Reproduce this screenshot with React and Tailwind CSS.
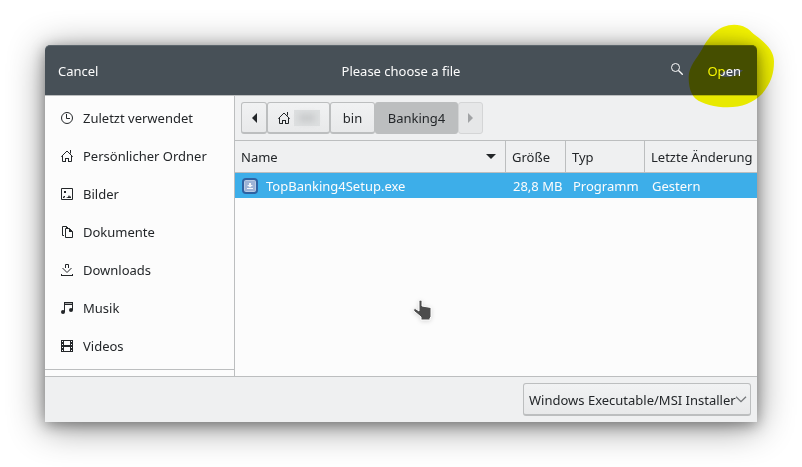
import React from "react";

function Icon({ children, className = "" }) {
  return (
    <svg aria-hidden="true" viewBox="0 0 12 12" className={`h-3 w-3 shrink-0 ${className}`}>
      {children}
    </svg>
  );
}

const ClockIcon = () => (
  <Icon>
    <circle cx="6" cy="6" r="5.5" fill="none" stroke="currentColor" />
    <path d="M5.5 2v4.5H9" fill="none" stroke="currentColor" />
  </Icon>
);

const HomeIcon = () => (
  <Icon>
    <path d="M.3 6.7 6 1l5.7 5.7M1.5 6v5.5H4M10.500 6v5.5H8" fill="none" stroke="currentColor" />
    <path d="M4 8h1v4H4zM7 8h1v4H7zM4 8h4v1H4zM9 0h1v3.500H9z" fill="currentColor" />
  </Icon>
);

const ImageIcon = () => (
  <Icon>
    <path d="M.5.5h11v11H.5z" fill="none" stroke="currentColor" />
    <path d="M3 3h2v2H3zM2 10V9l1-1h1v1l-1 1zM5 10l2-1 1-2 1 2 1-1v2z" fill="currentColor" />
  </Icon>
);

const DocumentsIcon = () => (
  <Icon>
    <path d="M3 9.500H1.500v-9h4L7 2M4.500 2.500h4l3 3v6h-7z" fill="none" stroke="currentColor" />
    <path d="M5 0l3 3H5zM8 2l4 4H8z" fill="currentColor" />
  </Icon>
);

const DownloadIcon = () => (
  <Icon>
    <path d="M0 11.500h12M.5 10v2M11.500 10v2M1.500 4 6 8.500 10.500 4M4.500 4V.5h3V4" fill="none" stroke="currentColor" />
  </Icon>
);

const MusicIcon = () => (
  <Icon>
    <path d="M3 0h9v3H3z" fill="currentColor" />
    <path d="M3.500 1v9M11.500 1v7" fill="none" stroke="currentColor" />
    <path d="M4 1.500h7" stroke="#fcfcfc" strokeWidth=".6" />
    <circle cx="2" cy="10" r="2" fill="currentColor" />
    <circle cx="10" cy="8" r="2" fill="currentColor" />
  </Icon>
);

const VideoIcon = () => (
  <Icon>
    <path d="M0 0h12v12H0z" fill="currentColor" />
    <path d="M3 1h6v4H3zM3 7h6v4H3zM1 1h1v1H1zM1 4h1v1H1zM1 7h1v1H1zM1 10h1v1H1zM10 1h1v1h-1zM10 4h1v1h-1zM10 7h1v1h-1zM10 10h1v1h-1z" fill="#fcfcfc" />
  </Icon>
);

const places = [
  ["Zuletzt verwendet", ClockIcon],
  ["Persönlicher Ordner", HomeIcon],
  ["Bilder", ImageIcon],
  ["Dokumente", DocumentsIcon],
  ["Downloads", DownloadIcon],
  ["Musik", MusicIcon],
  ["Videos", VideoIcon],
];

const pathButton =
  "flex h-8 items-center justify-center rounded-[3px] border border-b-2 border-[#bcbebf] bg-gradient-to-b from-[#f1f2f3] to-[#e8e9ea]";

function Header() {
  return (
    <header className="grid h-[50px] shrink-0 grid-cols-3 items-center rounded-t-[5px] border-t border-[#5b656c] bg-[#475057] px-[13px] text-[#fcfcfc]">
      <button type="button" className="justify-self-start">Cancel</button>
      <h1 className="text-center">Please choose a file</h1>
      <div className="flex items-center justify-end gap-6 pr-[3px]">
        <button type="button" aria-label="Search" className="pb-1">
          <Icon>
            <circle cx="4.500" cy="4.500" r="4" fill="none" stroke="currentColor" />
            <path d="m7.500 7.500 4.200 4.200" stroke="currentColor" strokeWidth="1.300" />
          </Icon>
        </button>
        <div className="relative">
          <button type="button">
            Op<span className="relative z-10">en</span>
          </button>
          <svg
            aria-hidden="true"
            viewBox="0 0 276 276"
            className="pointer-events-none absolute -left-[22px] -top-[42px] h-[92px] w-[92px] max-w-none mix-blend-multiply"
          >
            <path
              fillRule="evenodd"
              fill="#f8f800"
              d="M148 14C174 14 192 26 207 43C234 62 267 88 267 124C267 162 258 190 231 222C205 248 170 262 128 262C90 262 52 252 32 236C16 222 11 198 11 172C11 138 34 118 52 86C72 48 102 14 148 14ZM105 163L122 152L150 148L174 151L160 163L135 171L112 170Z"
            />
          </svg>
        </div>
      </div>
    </header>
  );
}

function Places() {
  return (
    <nav className="flex w-[190px] shrink-0 flex-col border-r border-[#bcbebf] bg-[#fcfcfc]">
      <ul className="border-b border-[#bcbebf] pb-1 pt-[3px]">
        {places.map(([name, Glyph]) => (
          <li key={name}>
            <button type="button" className="flex h-[38px] w-full items-center gap-[10px] pl-4">
              <Glyph />
              {name}
            </button>
          </li>
        ))}
      </ul>
      <div className="h-[6px]" />
    </nav>
  );
}

function PathBar() {
  return (
    <div className="flex h-[45px] shrink-0 items-center border-b border-[#bcbebf] px-[6px]">
      <button type="button" aria-label="Back" className={`${pathButton} w-[26px]`}>
        <svg aria-hidden="true" viewBox="0 0 5 10" className="h-[10px] w-[5px]">
          <path d="M5 0v10L0 5z" fill="currentColor" />
        </svg>
      </button>
      <button type="button" aria-label="Home" className={`${pathButton} w-[63px] gap-1`}>
        <HomeIcon />
        <span className="flex h-4 w-[26px] items-center justify-center bg-[#dddfe0]">
          <span className="h-2 w-4 bg-[#c8cacb] blur-[3px]" />
        </span>
      </button>
      <button type="button" className={`${pathButton} w-[45px]`}>bin</button>
      <button type="button" className="h-8 w-[83px] rounded-[3px] bg-[#bcbebf]">Banking4</button>
      <button
        type="button"
        aria-label="Forward"
        disabled
        className="flex h-8 w-[25px] items-center justify-center rounded-[3px] border border-[#d4d5d6] bg-[#e6e7e8] text-[#a1a3a5]"
      >
        <svg aria-hidden="true" viewBox="0 0 5 10" className="h-[10px] w-[5px]">
          <path d="M0 0v10l5-5z" fill="currentColor" />
        </svg>
      </button>
    </div>
  );
}

function Files() {
  return (
    <div className="flex-1 bg-[#fcfcfc]">
      <table className="w-full table-fixed border-separate border-spacing-0 whitespace-nowrap text-left">
        <colgroup>
          <col />
          <col className="w-[60px]" />
          <col className="w-[79px]" />
          <col className="w-[112px]" />
        </colgroup>
        <thead className="bg-[#eff0f1]">
          <tr className="h-8">
            <th className="border-b border-r border-[#bcbebf] p-0 font-normal">
              <button type="button" className="flex w-full items-center justify-between pl-[6px] pr-[9px]">
                Name
                <svg aria-hidden="true" viewBox="0 0 10 5" className="h-[5px] w-[10px]">
                  <path d="M0 0h10L5 5z" fill="currentColor" />
                </svg>
              </button>
            </th>
            <th className="border-b border-r border-[#bcbebf] p-0 pl-[6px] font-normal">
              <button type="button">Größe</button>
            </th>
            <th className="border-b border-r border-[#bcbebf] p-0 pl-[6px] font-normal">
              <button type="button">Typ</button>
            </th>
            <th className="border-b border-[#bcbebf] p-0 pl-[6px] font-normal">
              <button type="button">Letzte Änderung</button>
            </th>
          </tr>
        </thead>
        <tbody>
          <tr className="h-[25px] bg-[#3daee9] text-[#fcfcfc]">
            <td className="p-0 pl-[7px]">
              <div className="flex items-center gap-2">
                <svg aria-hidden="true" viewBox="0 0 16 16" className="h-4 w-4">
                  <rect width="16" height="16" rx="4" fill="#2f62a2" />
                  <rect x="2.500" y="2.500" width="11" height="11" rx="1" fill="#9db3d6" stroke="#b9cae4" />
                  <path d="M7 5h2v2h2L8 9.500 5 7h2zM5 10h6v1H5z" fill="#f4f7fb" />
                </svg>
                TopBanking4Setup.exe
              </div>
            </td>
            <td className="p-0 pl-[7px]">28,8 MB</td>
            <td className="p-0 pl-[7px]">Programm</td>
            <td className="p-0 pl-[7px]">Gestern</td>
          </tr>
        </tbody>
      </table>
    </div>
  );
}

function Footer() {
  return (
    <footer className="flex h-[46px] shrink-0 items-center justify-end border-t border-[#bcbebf] px-[6px]">
      <div className="relative">
        <select
          aria-label="File type"
          className="h-[33px] w-[228px] appearance-none rounded-[3px] border border-b-2 border-[#bcbebf] bg-gradient-to-b from-[#f1f2f3] to-[#e8e9ea] pl-[5px] pt-px text-[13px]"
        >
          <option>Windows Executable/MSI Installer</option>
        </select>
        <svg
          aria-hidden="true"
          viewBox="0 0 12 7"
          className="pointer-events-none absolute right-1 top-[13px] h-[7px] w-3"
        >
          <path d="m1 .7 5 5 5-5" fill="none" stroke="#74777a" strokeWidth="1.300" />
        </svg>
      </div>
    </footer>
  );
}

function Pointer() {
  return (
    <svg
      aria-hidden="true"
      viewBox="0 0 20 22"
      className="pointer-events-none absolute left-[368px] top-[254px] h-[22px] w-5 drop-shadow-sm"
    >
      <path
        d="M6 2.500C6 .8 9 .8 9 2.500V7l9 1.500V18l-1 1v2H8v-3L.8 12C0 10 2 9 3 10l3 2z"
        fill="#4d4d4d"
        stroke="#ffffff"
      />
    </svg>
  );
}

export default function App() {
  return (
    <div className="flex min-h-screen bg-white p-[45px] font-['Noto_Sans',sans-serif] text-[13px] leading-[18px] text-[#232629]">
      <main className="relative flex min-w-0 flex-1 flex-col rounded-t-[5px] bg-[#eff0f1] shadow-[0_5px_36px_rgba(0,0,0,0.45),0_3px_14px_rgba(0,0,0,0.35)]">
        <Header />
        <div className="flex flex-1 border-t border-[#bcbebf]">
          <Places />
          <section className="flex min-w-0 flex-1 flex-col">
            <PathBar />
            <Files />
          </section>
        </div>
        <Footer />
        <Pointer />
      </main>
    </div>
  );
}
